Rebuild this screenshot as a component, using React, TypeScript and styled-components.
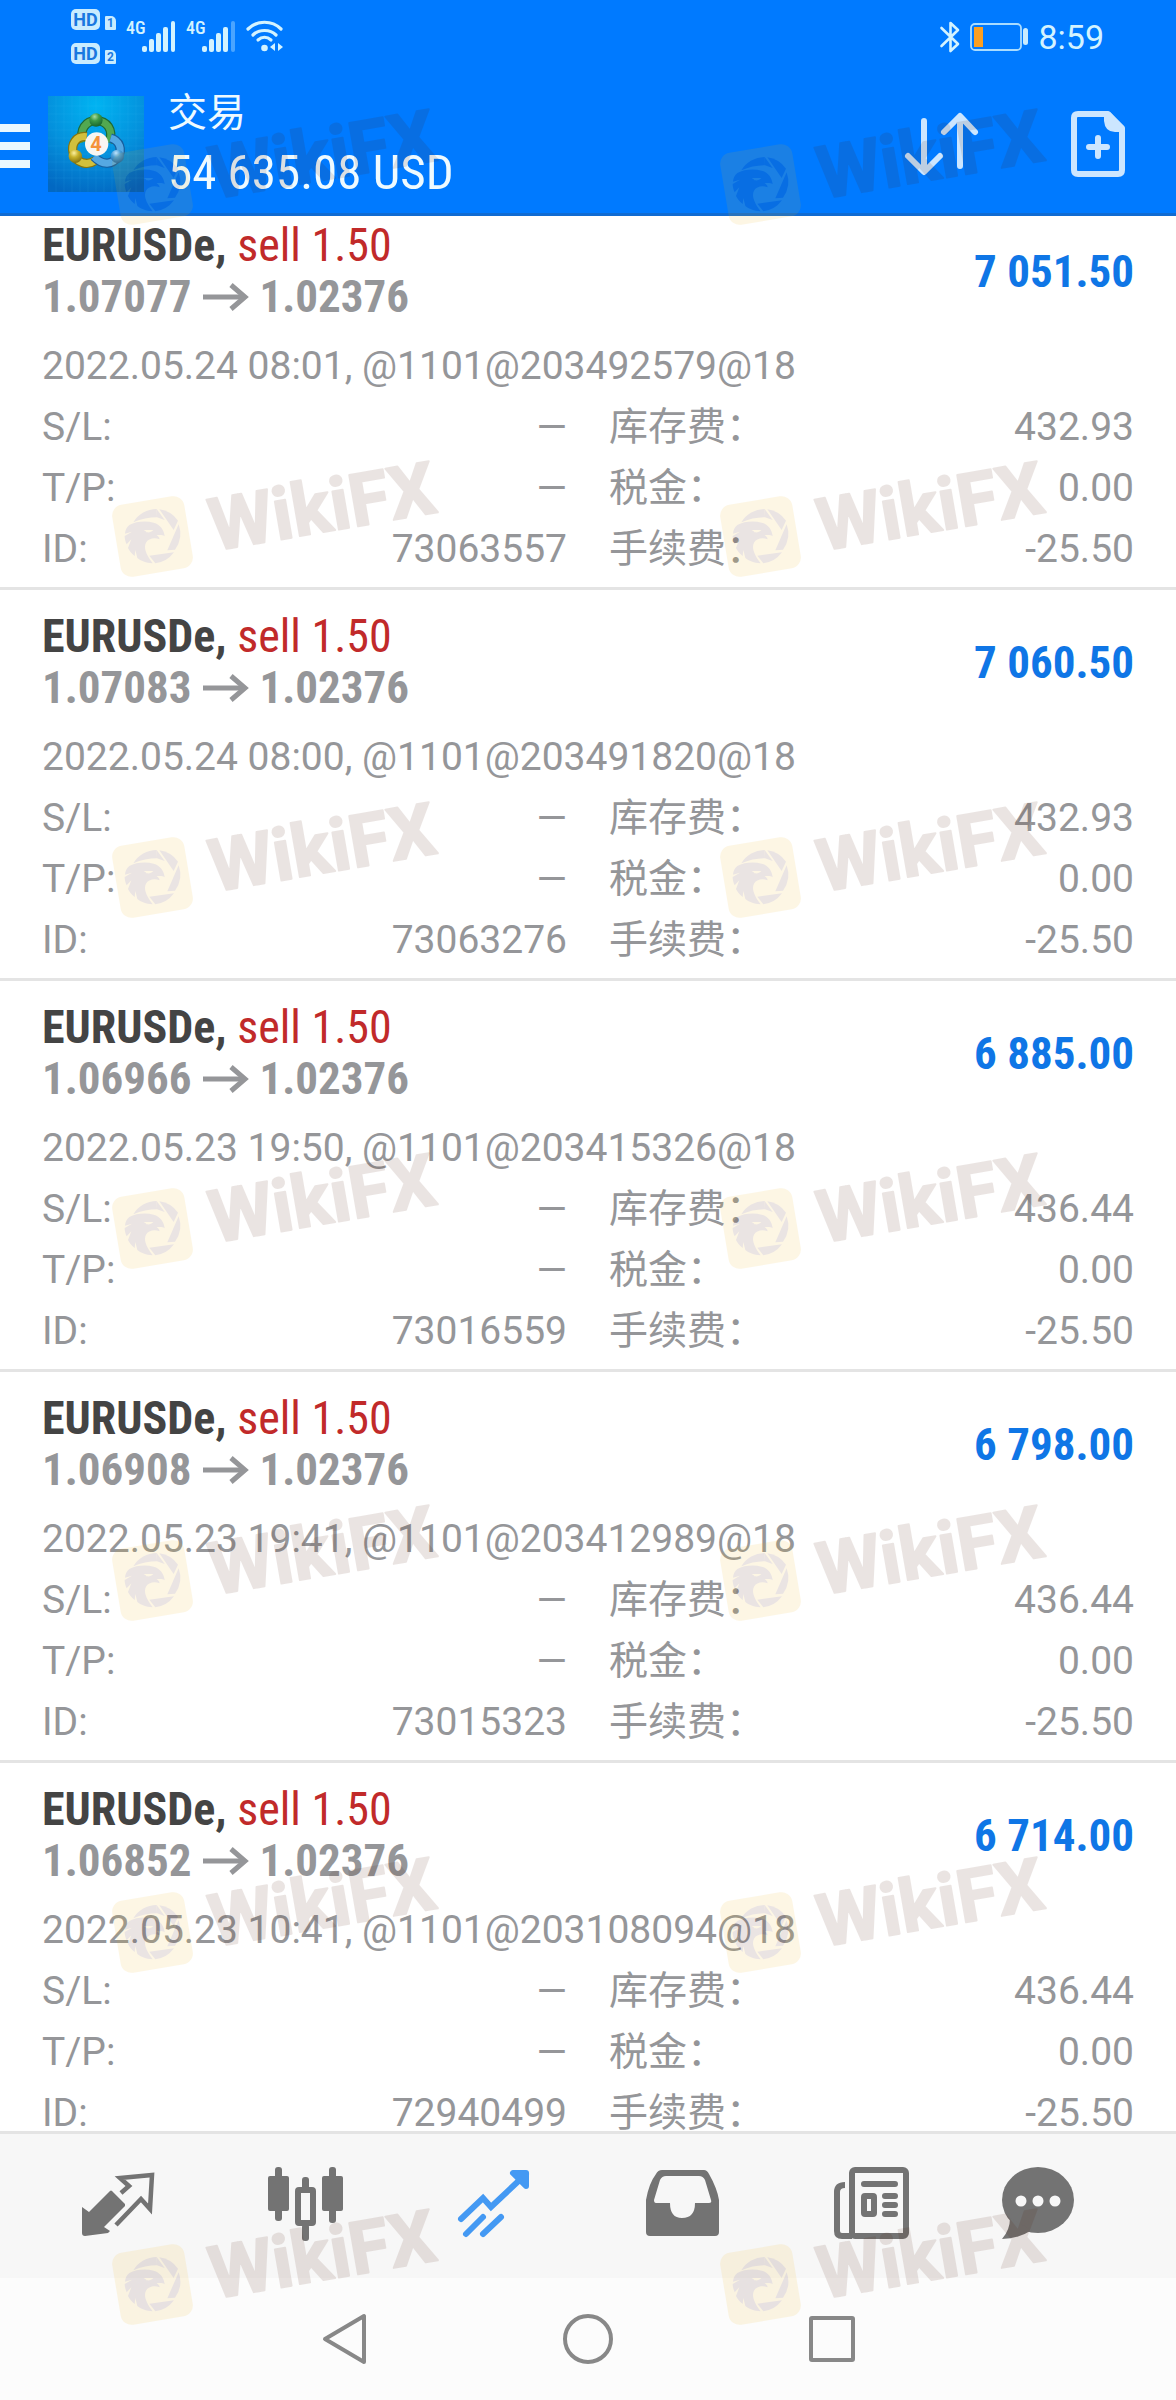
import React, { useLayoutEffect, useRef } from 'react';
import styled, { createGlobalStyle } from 'styled-components';

const sans = '"Roboto", "Noto Sans CJK SC", sans-serif';
const condensed = '"Roboto Condensed", "Roboto", "Noto Sans CJK SC", sans-serif';

const GlobalStyle = createGlobalStyle`
  *, *::before, *::after { box-sizing: border-box; }
  body { margin: 0; background: #ffffff; font-family: ${sans}; }
  svg { display: block; overflow: visible; }
`;

const Screen = styled.div`
  position: relative;
  display: flex;
  flex-direction: column;
  height: 100vh;
  overflow: hidden;
`;

/* ---------- header ---------- */

const Header = styled.header`
  flex: none;
  background: #007aff;
  border-bottom: 3px solid #106bd2;
`;

const StatusBar = styled.div`
  display: flex;
  align-items: flex-start;
  justify-content: space-between;
  height: 75px;
  padding: 9px 72px 0 71px;
  color: #d3f3ff;
`;

const StatusGroup = styled.div<{ $gap: number }>`
  display: flex;
  align-items: center;
  gap: ${(p) => p.$gap}px;
  height: 55px;
`;

const HdStack = styled.div`
  display: flex;
  flex-direction: column;
  justify-content: space-between;
  height: 55px;
`;

const HdLine = styled.div`
  display: flex;
  align-items: flex-end;
  gap: 5px;
`;

const HdBadge = styled.span`
  width: 29px;
  height: 21px;
  border-radius: 5px;
  background: #c9ecff;
  color: #1a78e0;
  font: 700 18px/21px ${sans};
  text-align: center;
`;

const SimBadge = styled.span`
  width: 11px;
  height: 14px;
  border-radius: 1px 5px 1px 1px;
  background: #c9ecff;
  color: #1a78e0;
  font: 700 12px/14px ${sans};
  text-align: center;
`;

const Signal = styled.div`
  display: flex;
  align-items: flex-start;
  height: 31px;
`;

const NetworkLabel = styled.span`
  font: 500 18px/14px ${condensed};
  width: 16px;
`;

const Clock = styled.time`
  font: 400 34px/40px ${sans};
`;

const TitleBar = styled.div`
  display: flex;
  align-items: center;
  height: 138px;
  padding-right: 51px;
`;

const IconButton = styled.button`
  display: block;
  flex: none;
  padding: 0;
  border: 0;
  background: none;
  cursor: pointer;
`;

const AppLogo = styled.svg`
  flex: none;
  width: 96px;
  height: 96px;
  margin-left: 18px;
`;

const Titles = styled.div`
  flex: 1;
  margin-left: 24px;
  padding-bottom: 2px;
  color: #eefaff;
`;

const PageTitle = styled.h1`
  margin: 0;
  font: 400 39px/60px ${sans};
`;

const Balance = styled.p`
  margin: 0;
  font: 400 49px/60px ${condensed};
`;

const Actions = styled.div`
  display: flex;
  align-items: center;
  gap: 93px;
`;

/* ---------- trade list ---------- */

const TradeList = styled.main`
  flex: 1 1 0;
  min-height: 0;
  overflow-y: auto;
  scrollbar-width: none;
`;

const Card = styled.article`
  padding: 21px 42px 7px;
  border-bottom: 3px solid #e4e4e4;
`;

const CardHead = styled.div`
  display: flex;
  align-items: center;
  justify-content: space-between;
`;

const Symbol = styled.h2`
  margin: 0;
  color: #444444;
  font: 700 46px/51px ${condensed};
`;

const Side = styled.span`
  color: #c12a2a;
  font-weight: 400;
`;

const Prices = styled.div`
  display: flex;
  align-items: center;
  gap: 11px;
  color: #959699;
  font: 700 45px/51px ${condensed};
`;

const Profit = styled.strong`
  color: #0f76e6;
  font: 700 45px/51px ${condensed};
`;

const Meta = styled.p`
  margin: 14px 0 0;
  color: #959699;
  font: 400 39px/61px ${sans};
`;

const Details = styled.dl`
  display: grid;
  grid-template-columns: 1fr 1fr;
  column-gap: 42px;
  margin: 0;
  color: #959699;
  font: 400 39px/61px ${sans};
`;

const Detail = styled.div`
  display: flex;
  justify-content: space-between;
  height: 61px;
`;

const Value = styled.dd`
  margin: 0;
`;

/* ---------- bottom bars ---------- */

const TabBar = styled.nav`
  display: grid;
  flex: none;
  grid-template-columns: repeat(5, 188fr) 148fr;
  justify-items: center;
  height: 147px;
  padding: 32px 64px 0 24px;
  border-top: 3px solid #e4e4e4;
  background: #f7f7f7;
`;

const Tab = styled(IconButton)<{ $active?: boolean }>`
  width: 76px;
  height: 76px;
  color: ${(p) => (p.$active ? '#4499f3' : '#737373')};
`;

const SystemBar = styled.nav`
  display: grid;
  flex: none;
  grid-template-columns: repeat(3, 244px);
  justify-content: center;
  justify-items: center;
  align-items: center;
  height: 122px;
  background: #fcfcfc;
  color: #888888;
`;

/* ---------- watermark ---------- */

const WatermarkLayer = styled.div`
  position: absolute;
  inset: 0;
  overflow: hidden;
  pointer-events: none;
`;

const Stamp = styled.svg<{ $left: number; $top: number }>`
  position: absolute;
  left: ${(p) => p.$left}px;
  top: ${(p) => p.$top}px;
  width: 350px;
  height: 150px;
  opacity: 0.11;
`;

const Watermark = ({ left, top }: { left: number; top: number }) => (
  <Stamp $left={left} $top={top} viewBox="0 0 350 150">
    <rect x="16" y="60" width="73" height="73" rx="11" fill="#f0b414" transform="rotate(-9.5 52.5 96.5)" />
    <g transform="translate(6 50) scale(0.3333)" fill="#4b1410">
      <path d="M152 57 A82 82 0 0 0 82 97 C105 87 130 82 153 82 Z" />
      <path d="M152 57 L153 82 L176 90 Z" />
      <path d="M160 58 A82 82 0 0 1 216 92 L203 120 Z" />
      <path d="M218 103 A82 82 0 0 1 207 179 L184 181 Z" />
      <path d="M204 187 A82 82 0 0 1 148 220 L130 197 Z" />
      <path d="M70 105 C90 94 120 92 143 98 C163 103 174 120 176 139 C168 133 160 136 152 135 C158 141 162 143 160 148 C146 141 126 146 120 158 C113 172 118 190 140 220 C120 219 104 212 94 204 L88 180 L86 198 C76 190 70 182 66 174 L76 148 L62 163 C58 154 56 146 56 138 L78 125 L57 131 C58 120 62 112 70 105 Z" />
      <path d="M113 120 L142 120 C136 128 122 130 119 124 Z" fill="#f0b414" />
    </g>
    <text
      x="114"
      y="111"
      transform="rotate(-9.8 114 111)"
      fill="#4b1400"
      stroke="#4b1400"
      strokeWidth="2"
      strokeLinejoin="round"
      fontFamily="Roboto, sans-serif"
      fontWeight="700"
      fontSize="73"
    >
      WikiFX
    </text>
  </Stamp>
);

const stampLefts = [100, 708];
const stampTops = [88, 440, 781, 1132, 1484, 1836, 2188];

/* ---------- icons ---------- */

const SignalBars = ({ weakLast }: { weakLast?: boolean }) => (
  <svg width="34" height="31" viewBox="0 0 34 31" fill="currentColor">
    <rect x="0" y="25" width="5" height="6" rx="2" />
    <rect x="7" y="18" width="5" height="13" rx="2" />
    <rect x="14" y="12" width="5" height="19" rx="2" />
    <rect x="21" y="6" width="5" height="25" rx="2" />
    <rect x="29" y="0" width="4" height="31" rx="2" opacity={weakLast ? 0.35 : 1} />
  </svg>
);

const Wifi = () => (
  <svg width="38" height="31" viewBox="0 0 38 31" fill="none" stroke="currentColor" strokeWidth="3.2" strokeLinecap="round">
    <path d="M2 8 C11 -1 26 -1 35 8" />
    <path d="M7 14 C13 8 24 8 30 14" />
    <path d="M12 19 C16 15.500 21 15.500 25 19" />
    <circle cx="18.500" cy="27" r="3.300" fill="currentColor" stroke="none" />
    <path d="M29 22 V30 L24 26 Z M32 22 L37 26 L32 30 Z" fill="currentColor" stroke="none" />
  </svg>
);

const Bluetooth = () => (
  <svg width="20" height="32" viewBox="0 0 20 32" fill="none" stroke="currentColor" strokeWidth="2.600" strokeLinejoin="round" strokeLinecap="round">
    <path d="M1.500 7 L18 23 L10.500 30 V2 L18 9 L1.500 25" />
  </svg>
);

const Battery = () => (
  <svg width="58" height="28" viewBox="0 0 58 28">
    <rect x="1" y="1" width="50" height="26" rx="4" fill="none" stroke="#a9dcff" strokeWidth="1.800" />
    <rect x="4" y="4" width="9" height="20" fill="#fc9f20" />
    <rect x="53" y="5" width="5" height="17" rx="2.500" fill="#c9ecff" />
  </svg>
);

const Logo = () => (
  <AppLogo viewBox="12 12 288 288" role="img" aria-label="MetaTrader 4">
    <defs>
      <radialGradient id="sky" cx="0.5" cy="0.1" r="0.95">
        <stop offset="0" stopColor="#00b4f2" />
        <stop offset="0.55" stopColor="#0490dc" />
        <stop offset="1" stopColor="#0268c2" />
      </radialGradient>
      <radialGradient id="green" cx="0.4" cy="0.25" r="0.8">
        <stop offset="0" stopColor="#a8dca0" />
        <stop offset="0.4" stopColor="#3d9a48" />
        <stop offset="1" stopColor="#14602a" />
      </radialGradient>
      <radialGradient id="gold" cx="0.4" cy="0.25" r="0.8">
        <stop offset="0" stopColor="#fbf0a0" />
        <stop offset="0.4" stopColor="#c9b32c" />
        <stop offset="1" stopColor="#7d6c0c" />
      </radialGradient>
      <radialGradient id="azure" cx="0.4" cy="0.25" r="0.8">
        <stop offset="0" stopColor="#bfe4fb" />
        <stop offset="0.4" stopColor="#4a9fd8" />
        <stop offset="1" stopColor="#175e9e" />
      </radialGradient>
    </defs>
    <rect x="12" y="12" width="288" height="288" fill="url(#sky)" />
    <path
      d="M36 12V300M60 12V300M84 12V300M108 12V300M132 12V300M156 12V300M180 12V300M204 12V300M228 12V300M252 12V300M276 12V300M12 42H300M12 66H300M12 90H300M12 114H300M12 138H300M12 162H300M12 186H300M12 210H300M12 234H300M12 258H300"
      stroke="#55c8f5"
      strokeOpacity="0.16"
      strokeWidth="2"
    />
    <g fill="none">
      <path d="M118 150 C104 112 126 86 156 86 C188 86 210 112 196 152" stroke="#1f6a34" strokeWidth="28" />
      <path d="M118 150 C104 112 126 86 156 86 C188 86 210 112 196 152" stroke="#52a850" strokeWidth="21" />
      <path d="M128 134 C96 130 80 158 88 184 C98 214 130 222 154 206" stroke="#85740e" strokeWidth="28" />
      <path d="M128 134 C96 130 80 158 88 184 C98 214 130 222 154 206" stroke="#d2c03c" strokeWidth="21" />
      <path d="M200 138 C228 146 236 174 222 194 C206 218 176 222 150 194" stroke="#175e9e" strokeWidth="28" />
      <path d="M200 138 C228 146 236 174 222 194 C206 218 176 222 150 194" stroke="#55a8e2" strokeWidth="21" />
    </g>
    <circle cx="156" cy="84" r="20" fill="url(#green)" />
    <circle cx="94" cy="193" r="20" fill="url(#gold)" />
    <circle cx="220" cy="193" r="20" fill="url(#azure)" />
    <circle cx="158" cy="156" r="35" fill="#f8f6f3" />
    <text x="156" y="177" textAnchor="middle" fontFamily="Roboto, sans-serif" fontWeight="700" fontSize="60" fill="#f5923a">
      4
    </text>
  </AppLogo>
);

const PriceArrow = () => (
  <svg width="46" height="28" viewBox="0 0 46 28" fill="none" stroke="currentColor" strokeWidth="5" role="img" aria-label="to">
    <path d="M0 14 H42" />
    <path d="M28 2 L42 14 L28 26" />
  </svg>
);

const tabs = [
  {
    label: '行情',
    icon: (
      <>
        <path d="M2 41 L9 46 L30 25 Q31 24 32 25 L45 38 L45 40 L24 61 L30 65 L28 67 L5 70 Q2 70 2 67 Z" fill="currentColor" />
        <path d="M41 27 L49 20 L40 12 L72 9 L70 43 L61 33 L36 59" fill="none" stroke="currentColor" strokeWidth="4.500" />
      </>
    ),
  },
  {
    label: '图表',
    icon: (
      <g fill="currentColor">
        <rect x="0" y="10" width="21" height="35" rx="2" />
        <rect x="7" y="1" width="7" height="54" rx="3" />
        <rect x="54" y="10" width="21" height="35" rx="2" />
        <rect x="61" y="1" width="7" height="56" rx="3" />
        <rect x="34" y="11" width="7" height="14" rx="3" />
        <rect x="34" y="58" width="7" height="17" rx="3" />
        <rect x="30" y="24" width="15" height="33" fill="none" stroke="currentColor" strokeWidth="6" rx="1" />
      </g>
    ),
  },
  {
    label: '交易',
    active: true,
    icon: (
      <g fill="none" stroke="currentColor" strokeWidth="6" strokeLinecap="round">
        <path d="M5 53 L27 32 L35 41 L70 8" />
        <path d="M57 7 H70 V20 Z" fill="currentColor" strokeLinejoin="round" />
        <path d="M10 68 L27 51 M27 68 L45 51" />
      </g>
    ),
  },
  {
    label: '历史',
    icon: (
      <path
        fill="currentColor"
        fillRule="evenodd"
        d="M18 4 H60 Q63 4 65 8 Q73 22 75 34 V66 Q75 70 71 70 H6 Q2 70 2 66 V34 Q5 17 12 8 Q14 4 18 4 Z M22 10 Q18 10 16 14 L10 34 Q10 37 12 37 H26 Q26 52 38 52 Q51 52 51 37 H65 Q68 37 67 34 L61 14 Q59 10 55 10 Z"
      />
    ),
  },
  {
    label: '新闻',
    icon: (
      <g fill="none" stroke="currentColor" strokeWidth="6">
        <rect x="20" y="4" width="54" height="66" rx="3" />
        <path d="M13 19 Q5 19 5 26 V65 Q5 70 10 70 H20" />
        <rect x="32" y="30" width="10" height="18" rx="1" />
        <path d="M32 18 H63 M53 30 H63 M53 39 H63 M53 48 H63" strokeLinecap="round" />
      </g>
    ),
  },
  {
    label: '消息',
    icon: (
      <>
        <ellipse cx="38" cy="34" rx="36" ry="33" fill="currentColor" />
        <path d="M10 52 Q10 64 2 73 Q18 73 32 64 Z" fill="currentColor" />
        <circle cx="21" cy="35" r="5.500" fill="#f7f7f7" />
        <circle cx="38" cy="35" r="5.500" fill="#f7f7f7" />
        <circle cx="55" cy="35" r="5.500" fill="#f7f7f7" />
      </>
    ),
  },
];

/* ---------- data ---------- */

const trades = [
  { id: '73063557', open: '1.07077', profit: '7 051.50', meta: '2022.05.24 08:01, @1101@203492579@18', swap: '432.93' },
  { id: '73063276', open: '1.07083', profit: '7 060.50', meta: '2022.05.24 08:00, @1101@203491820@18', swap: '432.93' },
  { id: '73016559', open: '1.06966', profit: '6 885.00', meta: '2022.05.23 19:50, @1101@203415326@18', swap: '436.44' },
  { id: '73015323', open: '1.06908', profit: '6 798.00', meta: '2022.05.23 19:41, @1101@203412989@18', swap: '436.44' },
  { id: '72940499', open: '1.06852', profit: '6 714.00', meta: '2022.05.23 10:41, @1101@203108094@18', swap: '436.44' },
];

const TradeCard = ({ trade }: { trade: (typeof trades)[number] }) => {
  const details = [
    ['S/L:', '—'],
    ['库存费：', trade.swap],
    ['T/P:', '—'],
    ['税金：', '0.00'],
    ['ID:', trade.id],
    ['手续费：', '-25.50'],
  ];
  return (
    <Card>
      <CardHead>
        <div>
          <Symbol>
            EURUSDe, <Side>sell 1.50</Side>
          </Symbol>
          <Prices>
            <span>{trade.open}</span>
            <PriceArrow />
            <span>1.02376</span>
          </Prices>
        </div>
        <Profit>{trade.profit}</Profit>
      </CardHead>
      <Meta>{trade.meta}</Meta>
      <Details>
        {details.map(([label, value]) => (
          <Detail key={label}>
            <dt>{label}</dt>
            <Value>{value}</Value>
          </Detail>
        ))}
      </Details>
    </Card>
  );
};

export default function App() {
  const list = useRef<HTMLElement>(null);

  // The list opens scrolled slightly past the first card's top padding.
  useLayoutEffect(() => {
    if (list.current) list.current.scrollTop = 17;
  }, []);

  return (
    <Screen>
      <GlobalStyle />
      <Header>
        <StatusBar>
          <StatusGroup $gap={10}>
            <HdStack>
              <HdLine>
                <HdBadge>HD</HdBadge>
                <SimBadge>1</SimBadge>
              </HdLine>
              <HdLine>
                <HdBadge>HD</HdBadge>
                <SimBadge>2</SimBadge>
              </HdLine>
            </HdStack>
            <Signal>
              <NetworkLabel>4G</NetworkLabel>
              <SignalBars />
            </Signal>
            <Signal>
              <NetworkLabel>4G</NetworkLabel>
              <SignalBars weakLast />
            </Signal>
            <Wifi />
          </StatusGroup>
          <StatusGroup $gap={10}>
            <Bluetooth />
            <Battery />
            <Clock>8:59</Clock>
          </StatusGroup>
        </StatusBar>
        <TitleBar>
          <IconButton aria-label="菜单">
            <svg width="30" height="48" viewBox="0 0 30 48" fill="#eaf8ff">
              <rect y="4" width="30" height="8" />
              <rect y="22" width="30" height="8" />
              <rect y="40" width="30" height="8" />
            </svg>
          </IconButton>
          <Logo />
          <Titles>
            <PageTitle>交易</PageTitle>
            <Balance>54 635.08 USD</Balance>
          </Titles>
          <Actions>
            <IconButton aria-label="排序">
              <svg width="73" height="64" viewBox="0 0 73 64" fill="none" stroke="#cce6ff" strokeWidth="6" strokeLinecap="round" strokeLinejoin="round">
                <path d="M19 9 V59 M3 44 L19 60 L35 44" />
                <path d="M55 54 V5 M39 20 L55 4 L70 20" />
              </svg>
            </IconButton>
            <IconButton aria-label="新订单">
              <svg width="54" height="66" viewBox="0 0 54 66" fill="none" stroke="#cce6ff" strokeWidth="6">
                <path d="M37 3 H7 Q3 3 3 7 V59 Q3 63 7 63 H47 Q51 63 51 59 V17 Z" strokeLinejoin="round" />
                <path d="M33 3 V10 Q34 21 44 21 H52 V15 L39 1 Z" fill="#cce6ff" stroke="none" />
                <path d="M27 27 V45 M18 36 H36" strokeLinecap="round" />
              </svg>
            </IconButton>
          </Actions>
        </TitleBar>
      </Header>

      <TradeList ref={list}>
        {trades.map((trade) => (
          <TradeCard key={trade.id} trade={trade} />
        ))}
      </TradeList>

      <TabBar>
        {tabs.map((tab) => (
          <Tab key={tab.label} aria-label={tab.label} $active={tab.active}>
            <svg width="76" height="76" viewBox="0 0 76 76">
              {tab.icon}
            </svg>
          </Tab>
        ))}
      </TabBar>

      <SystemBar>
        <IconButton aria-label="返回">
          <svg width="43" height="50" viewBox="0 0 43 50" fill="none" stroke="#888888" strokeWidth="4" strokeLinejoin="round">
            <path d="M41 2 V48 L2 25 Z" />
          </svg>
        </IconButton>
        <IconButton aria-label="主屏幕">
          <svg width="50" height="50" viewBox="0 0 50 50" fill="none" stroke="#888888" strokeWidth="4">
            <circle cx="25" cy="25" r="23" />
          </svg>
        </IconButton>
        <IconButton aria-label="最近任务">
          <svg width="46" height="46" viewBox="0 0 46 46" fill="none" stroke="#888888" strokeWidth="4" strokeLinejoin="round">
            <rect x="2" y="2" width="42" height="42" rx="1" />
          </svg>
        </IconButton>
      </SystemBar>

      <WatermarkLayer aria-hidden="true">
        {stampTops.map((top) => stampLefts.map((left) => <Watermark key={`${left}-${top}`} left={left} top={top} />))}
      </WatermarkLayer>
    </Screen>
  );
}
